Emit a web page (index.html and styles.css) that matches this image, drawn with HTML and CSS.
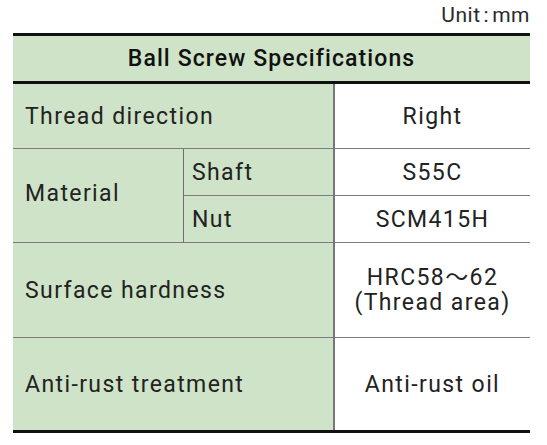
FILE: index.html
```html
<!DOCTYPE html>
<html lang="en">
<head>
<meta charset="utf-8">
<title>Ball Screw Specifications</title>
<link rel="stylesheet" href="styles.css">
</head>
<body>
<div class="page">
  <div class="unit">Unit<span class="colon">:</span>mm</div>
  <div class="spec">
    <div class="spec-head">Ball Screw Specifications</div>
    <div class="spec-body">
      <div class="cell label span2 r1">Thread direction</div>
      <div class="cell value r1">Right</div>

      <div class="cell label material">Material</div>
      <div class="cell label sub r2">Shaft</div>
      <div class="cell value r2">S55C</div>
      <div class="cell label sub r3">Nut</div>
      <div class="cell value r3">SCM415H</div>

      <div class="cell label span2 r4">Surface hardness</div>
      <div class="cell value r4 two-line"><span>HRC58～62</span><span>(Thread area)</span></div>

      <div class="cell label span2 r5 last">Anti-rust treatment</div>
      <div class="cell value r5 last">Anti-rust oil</div>
    </div>
  </div>
</div>
</body>
</html>
```
FILE: styles.css
```css
* { box-sizing: border-box; margin: 0; padding: 0; }

body {
  margin: 0;
  background: #ffffff;
  font-family: Roboto, "Noto Sans", "Noto Sans CJK JP", sans-serif;
  color: #222222;
}

.page {
  padding: 0 17px 0 13px;
  width: 547px;
}

.unit {
  height: 33px;
  text-align: right;
  font-size: 21px;
  line-height: 30px;
  letter-spacing: 0.5px;
  color: #2a2a2a;
}

.colon {
  margin: 0 3px;
}

.spec {
  width: 517px;
  border-top: 3px solid #111;
  border-bottom: 3px solid #111;
}

.spec-head {
  height: 48px;
  background: #cee3c7;
  border-bottom: 3px solid #111;
  display: flex;
  align-items: center;
  justify-content: center;
  font-weight: 500;
  font-size: 23px;
  letter-spacing: 1.1px;
  color: #111;
}

.spec-body {
  display: grid;
  grid-template-columns: 171px 151px 195px;
  grid-template-rows: 65px 47px 47px 95px 92px;
}

.cell {
  display: flex;
  align-items: center;
  font-size: 23px;
  letter-spacing: 1.4px;
  border-bottom: 1px solid #7d7d7d;
}

.cell.last { border-bottom: none; }

.label {
  background: #cee3c7;
  padding-left: 12px;
}

.span2 {
  grid-column: 1 / 3;
  border-right: 2px solid #777;
}

.material {
  grid-column: 1;
  grid-row: 2 / 4;
  border-right: 1px solid #6f6f6f;
  padding-bottom: 4px;
}

.sub {
  grid-column: 2;
  border-right: 2px solid #777;
  padding-left: 8px;
}

.value {
  grid-column: 3;
  justify-content: center;
}

.r1 { grid-row: 1; }
.r2 { grid-row: 2; }
.r3 { grid-row: 3; }
.r4 { grid-row: 4; }
.r5 { grid-row: 5; }

.two-line {
  flex-direction: column;
  line-height: 25px;
}
```
